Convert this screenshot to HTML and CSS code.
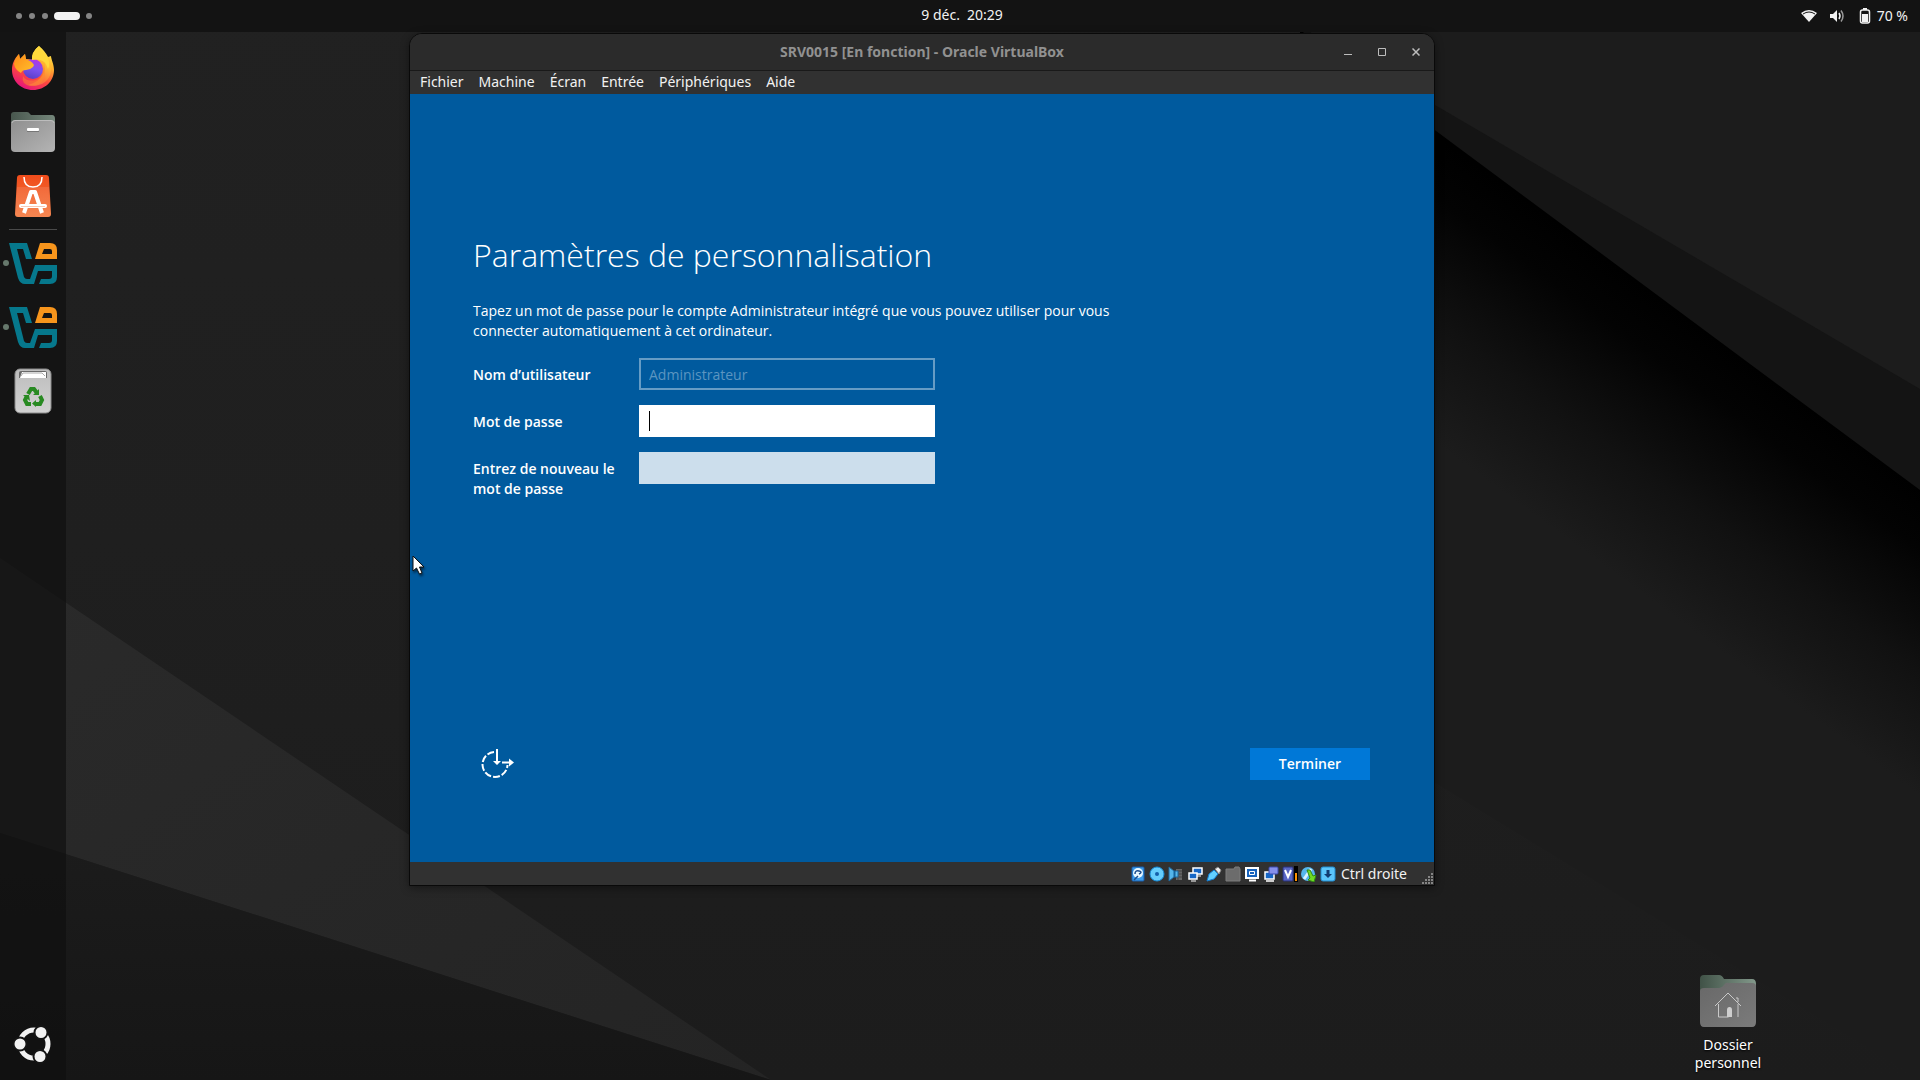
FILE: index.html
```html
<!DOCTYPE html>
<html lang="fr">
<head>
<meta charset="utf-8">
<title>Bureau</title>
<link rel="stylesheet" href="styles.css">
</head>
<body>
<svg class="wallpaper" viewBox="0 0 1920 1080" preserveAspectRatio="none" aria-hidden="true">
  <defs>
    <linearGradient id="fold" gradientUnits="userSpaceOnUse" x1="1677" y1="310" x2="1530" y2="512">
      <stop offset="0" stop-color="#000"/><stop offset=".2" stop-color="#030303"/><stop offset=".6" stop-color="#111"/><stop offset="1" stop-color="#1c1c1c"/>
    </linearGradient>
    <linearGradient id="shade" x1="0" y1="0" x2="0" y2="1"><stop offset="0" stop-color="#212121"/><stop offset=".5" stop-color="#1f1f1f"/><stop offset="1" stop-color="#1c1c1c"/></linearGradient>
    <linearGradient id="band" x1="0" y1="0" x2="1" y2="1"><stop offset="0" stop-color="#2a2a2a"/><stop offset="1" stop-color="#242424"/></linearGradient>
    <linearGradient id="low" x1="0" y1="0" x2="0" y2="1"><stop offset="0" stop-color="#1c1c1c"/><stop offset="1" stop-color="#161616"/></linearGradient>
  </defs>
  <rect width="1920" height="1080" fill="url(#shade)"/>
  <path d="M0 558 771 1080 0 833z" fill="url(#band)"/>
  <path d="M0 833 771 1080H0z" fill="url(#low)"/>
  <path d="M1300 20 1920 480V1080L1300 700z" fill="url(#fold)"/>
  <path d="M1300 30 1310 30 1920 385V490z" fill="#141414"/>
  <path d="M1300 26H1920V389z" fill="#1c1c1c"/>
</svg>

<header class="topbar">
  <button class="workspaces" aria-label="Activités"><i></i><i></i><i></i><i class="current"></i><i></i></button>
  <button class="clock"><span>9 déc.</span><span>20:29</span></button>
  <button class="system" aria-label="Système">
    <svg width="16" height="16" viewBox="0 0 16 16"><path d="M0 5Q8-1 16 5L8 14z" fill="#f2f2f2"/><path d="M2 6Q8 2 14 6" fill="none" stroke="#151515"/></svg>
    <svg width="16" height="16" viewBox="0 0 16 16"><path d="M1 6h3l4-4v12l-4-4H1z" fill="#f2f2f2"/><path d="M10 5q2 3 0 6" fill="none" stroke="#f2f2f2" stroke-width="1.5"/><path d="M12 2.500q4 5.500 0 11" fill="none" stroke="#999" stroke-width="1.500"/></svg>
    <svg class="battery" width="12" height="16" viewBox="0 0 12 16"><path d="M4 0h4v2H4z" fill="#f2f2f2"/><rect x="1.500" y="2" width="9" height="13" rx="2" fill="none" stroke="#f2f2f2" stroke-width="1.500"/><path d="M3 6h6v8H3z" fill="#f2f2f2"/></svg>
    <span>70 %</span>
  </button>
</header>

<div class="desktop">
  <nav class="dock" aria-label="Applications">
    <button aria-label="Firefox">
      <svg width="48" height="48" viewBox="0 0 48 48">
        <defs>
          <linearGradient id="fx" x1=".8" y1="0" x2=".3" y2="1"><stop offset="0" stop-color="#fff44f"/><stop offset=".35" stop-color="#ffb02e"/><stop offset=".65" stop-color="#ff4a3d"/><stop offset="1" stop-color="#e5127e"/></linearGradient>
          <linearGradient id="globe" x1=".7" y1="0" x2=".4" y2="1"><stop offset="0" stop-color="#b833e1"/><stop offset=".5" stop-color="#7b52ef"/><stop offset="1" stop-color="#5a3fc8"/></linearGradient>
          <linearGradient id="fox" x1="0" y1="0" x2="1" y2="1"><stop offset="0" stop-color="#ff8a16"/><stop offset="1" stop-color="#ffc22e"/></linearGradient>
        </defs>
        <path d="M30 2c4 3 7 7 9 11l3-1c0 3 3 8 3 14 0 11-9 20-21 20S3 37 3 26c0-6 2-11 7-16l1 5 5-5 1 5q4 0 6 1c0-6 3-11 7-14z" fill="url(#fx)"/>
        <path d="M36 14q10 11 3 21-7 9-20 6 20-5 17-27z" fill="#ffdf3d" opacity=".3"/>
        <circle cx="24" cy="25" r="10" fill="url(#globe)"/>
        <path d="M5 20q1-6 5-10l1 5 5-5 1 6q5 0 8 5l-1 2q-3 3-7 3-4 0-5 3-6-3-7-9z" fill="url(#fox)"/>
        <path d="M23 16q-1-8 7-14 3 6 8 10 4 7 1 13-2-8-8-9-3-1-8 0z" fill="#ffd93c"/>
        <path d="M33 21q4 11-6 15-10 2-13-4-2 8 7 10 10 1 14-7 3-7-2-14z" fill="#ff8a2c" opacity=".5"/>
      </svg>
    </button>
    <button aria-label="Fichiers">
      <svg width="48" height="48" viewBox="0 0 48 48">
        <defs><linearGradient id="fd" x1="0" y1="0" x2="1" y2="1"><stop offset="0" stop-color="#8f8f8f"/><stop offset="1" stop-color="#b4b4b4"/></linearGradient>
        <linearGradient id="ft" x1="0" y1="0" x2="1" y2="0"><stop offset="0" stop-color="#48574e"/><stop offset="1" stop-color="#75877b"/></linearGradient></defs>
        <path d="M2 7q0-3 3-3h13q2 0 3 2l1 1h21q3 0 3 4v14H2z" fill="url(#ft)"/>
        <rect x="2" y="12" width="44" height="32" rx="4" fill="url(#fd)"/>
        <path d="M3 15q0-2 3-2.500h36q3 .5 3 2.500" fill="none" stroke="#bcbcbc"/>
        <rect x="18" y="20" width="12" height="3" rx="1" fill="#fff"/><path d="M18 23.500h12" stroke="#777"/>
      </svg>
    </button>
    <button aria-label="Logithèque">
      <svg width="48" height="48" viewBox="0 0 48 48">
        <defs><linearGradient id="bag" x1="0" y1="0" x2="0" y2="1"><stop offset="0" stop-color="#f04c1b"/><stop offset="1" stop-color="#f4793e"/></linearGradient></defs>
        <path d="M11 3h26q3 0 3 3l2 36q0 3-3 3H9q-3 0-3-3L8 6q0-3 3-3z" fill="url(#bag)"/>
        <path d="M8 15h32l2 27q0 3-3 3H9q-3 0-3-3z" fill="#fff" opacity=".1"/>
        <path d="M15 5q0 10 9 10t9-10" fill="none" stroke="#fff" stroke-width="1.500"/>
        <path d="M15 41 22 20h4l7 21" fill="none" stroke="#fff" stroke-width="4" stroke-linejoin="round"/>
        <path d="M12 34h24" stroke="#fff" stroke-width="4" stroke-linecap="round"/><path d="M12 34.500h24" stroke="#f9c9b5"/>
      </svg>
    </button>
    <hr>
    <button class="running" aria-label="VirtualBox">
      <svg width="48" height="48" viewBox="0 0 48 48"><g id="vb">
        <path d="M0 4h18l5 16h-6l-3-10H8l7 28q1 2 3 2h3l5-14h22v12q0 7-7 7H30l2-5h8q3 0 3-3v-5H29l-4 13H16q-5 0-7-6z" fill="#06788c"/>
        <path fill-rule="evenodd" d="M31 4h10q7 0 7 7v9H26zM35 10l-2 5h10v-3q0-2-2-2z" fill="#f7951c"/></g>
      </svg>
    </button>
    <button class="running" aria-label="VirtualBox, machine SRV0015">
      <svg width="48" height="48" viewBox="0 0 48 48"><use href="#vb"/></svg>
    </button>
    <button aria-label="Corbeille">
      <svg width="48" height="48" viewBox="0 0 48 48">
        <defs><linearGradient id="bin" x1="0" y1="0" x2="0" y2="1"><stop offset="0" stop-color="#bdbdbd"/><stop offset="1" stop-color="#d2d2d2"/></linearGradient></defs>
        <rect x="6" y="2" width="36" height="44" rx="5" fill="url(#bin)" stroke="#8b8b8b"/>
        <path d="M10 11V6q0-2 2-2h24q2 0 2 2v5z" fill="#696969"/><path d="M11 11 13 5h24v6z" fill="#fff"/><path d="M12 9l2-3h19l3 3" fill="none" stroke="#aaa"/>
        <g fill="none" stroke="#288a22" stroke-width="4"><path d="M19 27l3-5h3l3 4"/><path d="M31 29l2 4-2 4h-5"/><path d="M22 37h-4l-2-4 2-4"/></g>
        <path d="M30 22v6h-6zM27 33v7l-4-3.500zM14 28h6l1 6z" fill="#288a22"/>
      </svg>
    </button>
    <button class="show-apps" aria-label="Afficher les applications">
      <svg width="48" height="48" viewBox="0 0 48 48">
        <circle cx="25" cy="24" r="14" fill="none" stroke="#f2f2f2" stroke-width="5"/>
        <g fill="#f2f2f2" stroke="#151515" stroke-width="2"><circle cx="11" cy="24" r="6.500"/><circle cx="32" cy="12.500" r="6.500"/><circle cx="31" cy="36.500" r="6.500"/></g>
      </svg>
    </button>
  </nav>

  <main class="workspace">
    <section class="window">
      <header class="titlebar">
        <h1>SRV0015 [En fonction] - Oracle VirtualBox</h1>
        <div class="controls">
          <button aria-label="Réduire"><svg width="8" height="8" viewBox="0 0 8 8"><path d="M0 6.500h8"/></svg></button>
          <button aria-label="Agrandir"><svg width="8" height="8" viewBox="0 0 8 8"><path d="M.5.500h7v7h-7z"/></svg></button>
          <button aria-label="Fermer"><svg width="8" height="8" viewBox="0 0 8 8"><path d="M.5.500l7 7M7.500.500l-7 7" stroke-width="1.500"/></svg></button>
        </div>
      </header>
      <nav class="menubar">
        <button>Fichier</button><button>Machine</button><button>Écran</button><button>Entrée</button><button>Périphériques</button><button>Aide</button>
      </nav>
      <form class="setup">
        <h2>Paramètres de personnalisation</h2>
        <p>Tapez un mot de passe pour le compte Administrateur intégré que vous pouvez utiliser pour vous connecter automatiquement à cet ordinateur.</p>
        <div class="fields">
          <label for="user">Nom d’utilisateur</label>
          <input id="user" type="text" value="Administrateur" disabled>
          <label for="pass">Mot de passe</label>
          <input id="pass" class="active" type="password">
          <label for="again">Entrez de nouveau le mot de passe</label>
          <input id="again" type="password">
        </div>
        <footer>
          <button type="button" class="ease" aria-label="Options d’ergonomie">
            <svg width="34" height="30" viewBox="0 0 34 30" fill="none" stroke="#fff" stroke-width="2">
              <path d="M13 3A12.500 12.500 0 1 0 26.500 16" stroke-dasharray="7 2"/><path d="M16 0v13M21 13.500h8"/><path d="M12 12h8l-4 4zM28 9.500v8l5-4z" fill="#fff" stroke="none"/>
            </svg>
          </button>
          <button type="button" class="finish">Terminer</button>
        </footer>
        <svg class="pointer" width="14" height="20" viewBox="0 0 14 20"><path d="M1 1v15l3.500-3 3 6 2.500-1-2.500-6H12z" fill="#fff" stroke="#111"/></svg>
      </form>
      <footer class="statusbar">
        <svg width="16" height="16" viewBox="0 0 16 16"><rect x="2" y="1" width="12" height="14" rx="1" fill="#3b9ae8" stroke="#195eae"/><circle cx="8" cy="7" r="5" fill="#e8f8ff"/><path d="M5 8q0-4 4-3t0 3M8 10l-4 4" fill="none" stroke="#194b8c" stroke-width="1.500"/></svg>
        <svg width="16" height="16" viewBox="0 0 16 16"><circle cx="8" cy="8" r="7" fill="#66cdfb" stroke="#168bd8"/><circle cx="8" cy="8" r="2" fill="#145fa9"/></svg>
        <svg width="16" height="16" viewBox="0 0 16 16"><path d="M8 3h6v11H8z" fill="#666"/><path d="M10 4v10M14 5h-3m3 3h-3m3 3h-3" stroke="#444"/><path d="M1 1l5 4h4v6H6l-5 4z" fill="#55b6ea" stroke="#20679b"/><path d="M6.500 5v6" stroke="#14639c" stroke-width="2"/></svg>
        <svg width="16" height="16" viewBox="0 0 16 16"><g fill="#1666c5" stroke="#fff" stroke-width="1.500"><rect x="6" y="2" width="9" height="6"/><rect x="2" y="7" width="8" height="6"/></g><path d="M4 15h5M10 10h4" stroke="#fff"/></svg>
        <svg width="16" height="16" viewBox="0 0 16 16"><path d="M1 15l2-7 5-4 4 4-4 5z" fill="#62cfff" stroke="#137cd0"/><path d="M9 3l3-2 3 3-2 4z" fill="#eee" stroke="#888"/></svg>
        <svg width="16" height="16" viewBox="0 0 16 16"><path d="M1 3h8l1-2h4l1 2v12H1z" fill="#6c6c6c" stroke="#7c7c7c"/></svg>
        <svg width="16" height="16" viewBox="0 0 16 16"><rect x="2" y="2" width="12" height="10" fill="#1763bd" stroke="#fff" stroke-width="2"/><path d="M5.500 5.500h5v3h-5z" fill="none" stroke="#fff"/><path d="M5 14.500h7" stroke="#fff" stroke-width="2"/></svg>
        <svg width="16" height="16" viewBox="0 0 16 16"><path d="M2 6h9v7H2zM3 15h8" fill="#1666c5" stroke="#fff" stroke-width="1.500"/><rect x="6" y="1" width="9" height="7" rx="1" fill="#8690eb" stroke="#3d4ab1"/></svg>
        <svg width="16" height="16" viewBox="0 0 16 16"><rect x="1" y="1" width="10" height="14" rx="1" fill="#5966c4" stroke="#29317e"/><path d="M3 4l3 7 3-7" fill="none" stroke="#fff" stroke-width="2"/><path d="M12 0h4v16h-4z" fill="#000"/><path d="M13 7h2v8h-2z" fill="#ff9300"/></svg>
        <svg width="16" height="16" viewBox="0 0 16 16"><circle cx="7" cy="8" r="7" fill="#55b6ed"/><path d="M3 13l7-10" stroke="#d8f2ff" stroke-width="3"/><path d="M6 4h3l3 6 3-1-2 7-6-2 2-2z" fill="#6fdb24" stroke="#318914"/></svg>
        <svg width="16" height="16" viewBox="0 0 16 16"><rect x="1" y="1" width="14" height="14" rx="2" fill="#5cc6fb" stroke="#218fd4"/><path d="M6.500 4h3v4H12l-4 4-4-4h2.500z" fill="#123d72"/></svg>
        <span>Ctrl droite</span>
        <svg class="grip" width="12" height="12" viewBox="0 0 12 12" fill="#858585"><path d="M9 0h2v2H9zM9 3h2v2H9zM9 6h2v2H9zM9 9h2v2H9zM6 3h2v2H6zM6 6h2v2H6zM6 9h2v2H6zM3 6h2v2H3zM3 9h2v2H3zM0 9h2v2H0z"/></svg>
      </footer>
    </section>

    <a class="shortcut" href="#home">
      <svg width="56" height="52" viewBox="0 0 56 52">
        <defs><linearGradient id="hm" x1="0" y1="0" x2="1" y2="1"><stop offset="0" stop-color="#686868"/><stop offset="1" stop-color="#7b7b7b"/></linearGradient>
        <linearGradient id="ht" x1="0" y1="0" x2="1" y2="0"><stop offset="0" stop-color="#405247"/><stop offset="1" stop-color="#82988a"/></linearGradient></defs>
        <path d="M0 4q0-4 4-4h15q3 0 5 4h28q4 0 4 5v11H0z" fill="url(#ht)"/>
        <path d="M0 16q0-3 4-3h15q3 0 5-3t4-2h24q4 0 4 3v36q0 5-4 5H4q-4 0-4-5z" fill="url(#hm)"/>
        <path d="M15 31 28 18l13 13M18.500 29v13h10M38 29v13M36 23h2v4" fill="none" stroke="#c9c9c9"/>
        <path d="M27 42v-7q0-3 2.500-3t2.500 3v7z" fill="#cecece"/>
      </svg>
      <span>Dossier<br>personnel</span>
    </a>
  </main>
</div>
</body>
</html>
```
FILE: styles.css
```css
* { box-sizing: border-box; }
body {
  margin: 0;
  min-height: 100vh;
  display: flex;
  flex-direction: column;
  position: relative;
  background: #1e1e1e;
  color: #f2f2f2;
  font: 14px/20px "Noto Sans", "Open Sans", sans-serif;
}
button { border: 0; padding: 0; background: none; color: inherit; font: inherit; }
svg { display: block; flex: none; }
.wallpaper { position: absolute; inset: 0; width: 100%; height: 100%; z-index: -1; }

.topbar {
  display: grid;
  grid-template-columns: 1fr auto 1fr;
  align-items: center;
  height: 32px;
  padding: 0 12px 2px 16px;
  background: #131313;
}
.workspaces { display: flex; gap: 7px; align-items: center; padding-top: 2px; }
.workspaces i { width: 6px; height: 6px; border-radius: 3px; background: #858585; }
.workspaces .current { width: 26px; height: 8px; margin: 0 -1px; border-radius: 4px; background: #f2f2f2; }
.clock { display: flex; gap: 7px; }
.system { display: flex; align-items: center; gap: 12px; justify-self: end; padding-top: 2px; }
.system .battery { margin-right: -6px; margin-left: 2px; }

.desktop { flex: 1; display: flex; }
.dock {
  width: 66px;
  display: flex;
  flex-direction: column;
  padding: 4px 0;
  background: rgba(16, 16, 16, .7);
}
.dock button { height: 64px; display: grid; place-items: center; position: relative; }
.dock hr { width: 48px; height: 1px; margin: 1px auto; border: 0; background: #4a4a4a; }
.dock .running::before {
  content: "";
  position: absolute;
  left: 3px;
  top: 29px;
  width: 6px;
  height: 6px;
  border-radius: 3px;
  background: #66786c;
}
.dock .show-apps { margin-top: auto; }

.workspace { flex: 1; position: relative; }
.window {
  position: absolute;
  left: 343px;
  top: 1px;
  width: 1026px;
  border: 1px solid #090909;
  border-radius: 13px 13px 0 0;
  background: #313131;
  box-shadow: 0 2px 8px rgba(0, 0, 0, .4);
}
.titlebar {
  position: relative;
  display: grid;
  place-items: center;
  height: 37px;
  border-radius: 12px 12px 0 0;
  border-bottom: 1px solid #191919;
  background: #2b2b2b;
}
.titlebar h1 { margin: 0; font-size: 14px; line-height: 20px; font-weight: 700; color: #919191; }
.controls { position: absolute; right: 5px; top: 5px; display: flex; gap: 8px; }
.controls button { width: 26px; height: 26px; display: grid; place-items: center; }
.controls svg { fill: none; stroke: #bdbdbd; }
.menubar { display: flex; gap: 15px; height: 23px; padding: 0 10px 2px; }

.setup {
  position: relative;
  display: flex;
  flex-direction: column;
  aspect-ratio: 4 / 3;
  padding: 137px 64px 82px 63px;
  background: #005a9e;
  color: #fff;
  font-family: "Open Sans", "Noto Sans", sans-serif;
}
.setup h2 { margin: 0 0 22px; font-size: 32px; line-height: 48px; font-weight: 300; }
.setup p { margin: 0 0 17px; max-width: 670px; }
.fields { display: grid; grid-template-columns: 166px 296px; row-gap: 15px; align-items: start; }
.fields label { padding: 7px 16px 0 0; height: 32px; font-weight: 600; }
.fields input {
  width: 100%;
  height: 32px;
  padding: 0 8px;
  border: 2px solid transparent;
  background: #ccdeec;
  font: inherit;
  color: #000;
}
.fields input:disabled { background: transparent; border-color: #669cc5; color: #5b95c1; }
.fields .active {
  border-color: #fff;
  background: linear-gradient(#000, #000) 8px 4px / 1px 20px no-repeat #fff;
}
.setup footer { display: flex; justify-content: space-between; align-items: center; margin-top: auto; }
.setup .ease { padding-left: 8px; }
.setup .finish { width: 120px; height: 32px; background: #0078d7; font-weight: 600; }
.pointer { position: absolute; left: 2px; top: 461px; filter: drop-shadow(1px 2px 1px rgba(0, 0, 0, .5)); }

.statusbar { display: flex; align-items: center; justify-content: flex-end; gap: 3px; height: 23px; }
.statusbar span { margin: 0 12px 0 2px; }
.statusbar .grip { align-self: flex-end; }

.shortcut {
  position: absolute;
  right: 148px;
  bottom: 8px;
  width: 88px;
  display: flex;
  flex-direction: column;
  align-items: center;
  gap: 9px;
  color: #fff;
  font-size: 14px;
  line-height: 18px;
  text-align: center;
  text-decoration: none;
  text-shadow: 0 1px 2px #000;
}
```
